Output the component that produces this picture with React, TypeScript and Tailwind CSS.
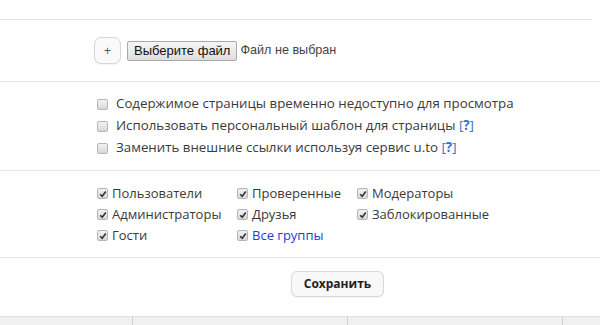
import React from "react";

function Box({ checked }: { checked?: boolean }) {
  return (
    <span className="inline-flex h-[11px] w-[11px] shrink-0 items-center justify-center rounded-[2px] border border-[#b5b5b5] bg-gradient-to-b from-[#f2f2f2] to-[#d8d8d8]">
      {checked && (
        <svg width="8" height="8" viewBox="0 0 8 8">
          <path d="M1.2 4.2 L3.2 6.2 L6.8 1.6" fill="none" stroke="#333" strokeWidth="1.6" />
        </svg>
      )}
    </span>
  );
}

function Opt({ label, help }: { label: string; help?: boolean }) {
  return (
    <div className="flex h-[22px] items-center gap-[8px]">
      <Box />
      <span>
        {label}
        {help && (
          <>
            {" "}
            <span className="text-[#3b6fc7]">[</span>
            <span className="font-bold text-[#2f6fcf]">?</span>
            <span className="text-[#3b6fc7]">]</span>
          </>
        )}
      </span>
    </div>
  );
}

function G({ label, link }: { label: string; link?: boolean }) {
  return (
    <div className="flex h-[21px] items-center gap-[4px]">
      <Box checked />
      <span className={link ? "text-[#1a3fd1]" : ""}>{label}</span>
    </div>
  );
}

export default function App() {
  return (
    <div className="relative h-[325px] w-[600px] overflow-hidden bg-white text-[13px] text-[#333]" style={{ fontFamily: '"Open Sans", sans-serif' }}>
      <div className="h-[19px]" />
      <div className="h-px w-[592px] bg-[#e6e6e6]" />
      <div className="flex h-[61px] items-center pl-[94px]" style={{ fontFamily: '"Liberation Sans", Arial, sans-serif' }}>
        <div className="flex h-[27px] w-[27px] items-center justify-center rounded-[7px] border border-[#d6d6d6] bg-[#fafafa] text-[12px] text-[#555] shadow-[0_1px_1px_rgba(0,0,0,0.05)]">+</div>
        <div className="ml-[6px] flex h-[20px] items-center rounded-[2px] border border-[#a8a8a8] bg-gradient-to-b from-[#f6f6f6] to-[#dedede] px-[6px] text-[13px] text-[#111]">Выберите файл</div>
        <span className="ml-[3px] text-[12.6px] text-[#444]">Файл не выбран</span>
      </div>
      <div className="h-px w-full bg-[#e6e6e6]" />
      <div className="flex h-[88px] flex-col pl-[97px] pt-[11px] text-[13.3px] text-[#3a3a3a]">
        <Opt label="Содержимое страницы временно недоступно для просмотра" />
        <Opt label="Использовать персональный шаблон для страницы" help />
        <Opt label="Заменить внешние ссылки используя сервис u.to" help />
      </div>
      <div className="h-px w-full bg-[#e6e6e6]" />
      <div className="flex h-[86px] pl-[97px] pt-[12px] text-[13px] text-[#3a3a3a]">
        <div className="w-[140px]">
          <G label="Пользователи" />
          <G label="Администраторы" />
          <G label="Гости" />
        </div>
        <div className="w-[120px]">
          <G label="Проверенные" />
          <G label="Друзья" />
          <G label="Все группы" link />
        </div>
        <div>
          <G label="Модераторы" />
          <G label="Заблокированные" />
        </div>
      </div>
      <div className="h-px w-full bg-[#e6e6e6]" />
      <div className="flex h-[58px] items-center justify-center pb-[6px]">
        <div className="ml-[75px] flex h-[26px] w-[93px] items-center justify-center rounded-[6px] border border-[#d8d8d8] bg-[#f8f8f8] text-[12px] font-bold text-[#222] shadow-[0_1px_1px_rgba(0,0,0,0.05)]">Сохранить</div>
      </div>
      <div className="flex h-[9px] border-t border-[#e0e0e0] bg-[#f0f0f0]">
        <div className="w-[133px] border-r border-[#d0d0d0]" />
        <div className="w-[215px] border-r border-[#d0d0d0]" />
        <div className="w-[215px] border-r border-[#d0d0d0]" />
      </div>
    </div>
  );
}
